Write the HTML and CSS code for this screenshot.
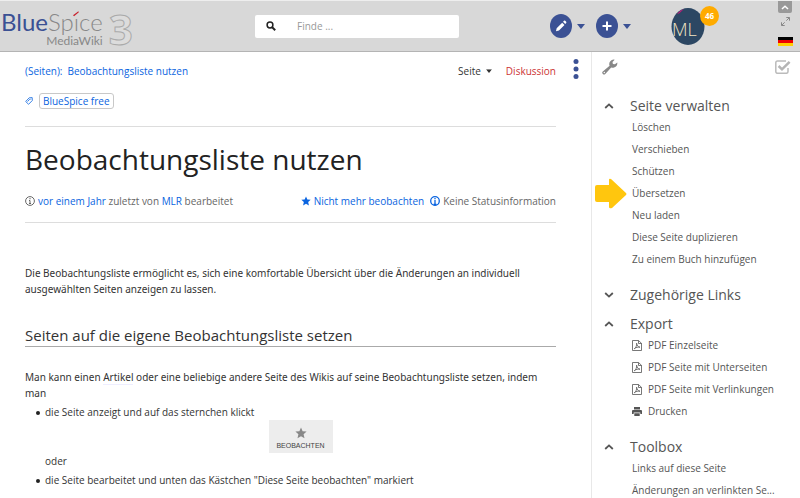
FILE: index.html
```html
<!DOCTYPE html>
<html lang="de">
<head>
<meta charset="utf-8">
<meta name="viewport" content="width=device-width, initial-scale=1">
<title>Beobachtungsliste nutzen – BlueSpice</title>
<link rel="stylesheet" href="styles.css">
</head>
<body>
<svg class="defs" width="0" height="0" aria-hidden="true">
  <symbol id="star" viewBox="0 0 12 12"><path d="M6 .6l1.6 3.7 4 .3-3 2.7.9 4L6 9.200l-3.500 2.100.9-4-3-2.700 4-.3z" fill="currentColor"/></symbol>
  <symbol id="up" viewBox="0 0 10 6"><path d="M1.200 5L5 1.400 8.800 5" fill="none" stroke="currentColor" stroke-width="1.800"/></symbol>
  <symbol id="down" viewBox="0 0 10 6"><path d="M1.200 1L5 4.600 8.800 1" fill="none" stroke="currentColor" stroke-width="1.800"/></symbol>
  <symbol id="caret" viewBox="0 0 8 5"><path d="M0 0h8L4 5z" fill="currentColor"/></symbol>
  <symbol id="pdf" viewBox="0 0 10 11"><path d="M1 .5h5.500L9.500 3.300v7.200H.5V.5zM6.500.5v3h3M2.300 8.800C4 7.500 4.900 5.500 4.600 3.200 5 5.500 6 7 8 7.200 6 6.800 4 7.300 2.300 8.800z" fill="none" stroke="currentColor" stroke-width=".8"/></symbol>
</svg>

<header class="topbar">
  <a class="logo" href="#" aria-label="BlueSpice MediaWiki 3">
    <span class="logo-words">
      <span class="logo-name"><span class="logo-blue">Blue</span><span class="logo-spice">Spice</span></span>
      <span class="logo-sub">MediaWiki</span>
      <svg class="logo-accent" viewBox="0 0 8 6" aria-hidden="true"><path d="M1 1h5v5H1z" fill="#d8d8d8"/><path d="M1 4.300L6.400.2 6.800 1.200 2.100 5.200z" fill="#c8202c"/></svg>
    </span>
    <span class="logo-three">3</span>
  </a>
  <form class="search" role="search">
    <button type="submit" aria-label="Suchen">
      <svg width="10" height="10" viewBox="0 0 10 10"><circle cx="4" cy="4" r="2.900" fill="none" stroke="currentColor" stroke-width="1.500"/><path d="M6.200 6.200L9.200 9.200" stroke="currentColor" stroke-width="2"/></svg>
    </button>
    <input type="search" aria-label="Finde" placeholder="Finde ...">
  </form>
  <div class="actions">
    <button class="round" aria-label="Bearbeiten"><svg width="12" height="12" viewBox="0 0 10 10"><path d="M.8 9.400L1.400 6.800 6 2.200 7.900 4.100 3.300 8.700zM6.700 1.500L7.500.7Q8 .3 8.500.7l.8.8q.4.5 0 1l-.8.8z" fill="currentColor"/></svg></button>
    <button class="drop" aria-label="Weitere Bearbeitungsoptionen"><svg width="8" height="5"><use href="#caret"/></svg></button>
    <button class="round" aria-label="Neu"><svg width="10" height="10" viewBox="0 0 10 10"><path d="M5 .5v9M.5 5h9" stroke="currentColor" stroke-width="2"/></svg></button>
    <button class="drop" aria-label="Weitere Optionen"><svg width="8" height="5"><use href="#caret"/></svg></button>
  </div>
  <a class="avatar" href="#" aria-label="ML, 46 Benachrichtigungen">
    <svg width="34" height="37" viewBox="0 0 34 37" aria-hidden="true"><ellipse cx="17" cy="18.500" rx="16.500" ry="18.500" fill="#2c4763"/><path d="M6 6Q9 2 13 1L8 5.500z" fill="#c2187a"/></svg>
    <span class="initials">ML</span>
    <span class="badge">46</span>
  </a>
  <div class="tools">
    <button class="collapse" aria-label="Kopfzeile einklappen"><svg width="8" height="5" viewBox="0 0 10 6"><use href="#up"/></svg></button>
    <button class="plain" aria-label="Vollbild"><svg width="9" height="9" viewBox="0 0 9 9"><path d="M5.300.5h3.200v3.200M8.300.7L5.300 3.700M.5 5.300v3.200h3.200M.7 8.300L3.700 5.300" fill="none" stroke="currentColor"/></svg></button>
    <button class="plain" aria-label="Sprache: Deutsch"><svg width="15" height="9"><path fill="#000" d="M0 0h15v3H0z"/><path fill="#e00" d="M0 3h15v3H0z"/><path fill="#ffce00" d="M0 6h15v3H0z"/></svg></button>
  </div>
</header>

<div class="page">
  <main class="content">
    <div class="crumbs">
      <nav class="path" aria-label="Brotkrumen"><a href="#">(Seiten):</a><a href="#">Beobachtungsliste nutzen</a></nav>
      <nav class="tabs" aria-label="Seite">
        <button class="tab">Seite <svg width="6" height="4" viewBox="0 0 8 5"><use href="#caret"/></svg></button>
        <a class="missing" href="#">Diskussion</a>
      </nav>
      <button class="more" aria-label="Mehr"><svg width="6" height="20" viewBox="0 0 6 20"><g fill="currentColor"><circle cx="3" cy="2.500" r="2.500"/><circle cx="3" cy="10" r="2.500"/><circle cx="3" cy="17.500" r="2.500"/></g></svg></button>
    </div>
    <div class="tags">
      <svg width="8" height="8" viewBox="0 0 8 8" aria-hidden="true"><path d="M4.200.8L7.200.6 7.300 3.500 3.600 7.300.7 4.500zM4.800 2.200L2.500 4.600M5.700 1.800v.8" fill="none" stroke="currentColor" stroke-width=".8"/></svg>
      <a class="tag" href="#">BlueSpice free</a>
    </div>
    <div class="heading">
      <h1>Beobachtungsliste nutzen</h1>
      <div class="meta">
        <span class="meta-part"><svg width="10" height="10" viewBox="0 0 10 10" aria-hidden="true"><circle cx="5" cy="5" r="4.400" fill="none" stroke="currentColor"/><path d="M5 2v1.300M4 4.500h1v3M4 7.500h2" fill="none" stroke="currentColor"/></svg><span><a href="#">vor einem Jahr</a> zuletzt von <a href="#">MLR</a> bearbeitet</span></span>
        <span class="meta-right">
          <a class="meta-part" href="#"><svg width="10" height="10"><use href="#star"/></svg>Nicht mehr beobachten</a>
          <span class="meta-part"><svg class="status" width="10" height="10" viewBox="0 0 10 10" aria-hidden="true"><circle cx="5" cy="5" r="4.300" fill="none" stroke="currentColor" stroke-width="1.300"/><path d="M5 2v1.200M5 4v4.500M3.500 8.500h3" stroke="currentColor" stroke-width="1.300"/></svg>Keine Statusinformation</span>
        </span>
      </div>
    </div>
    <article class="article">
      <p>Die Beobachtungsliste ermöglicht es, sich eine komfortable Übersicht über die Änderungen an individuell ausgewählten Seiten anzeigen zu lassen.</p>
      <h2>Seiten auf die eigene Beobachtungsliste setzen</h2>
      <p>Man kann einen <span class="term">Artikel</span> oder eine beliebige andere Seite des Wikis auf seine Beobachtungsliste setzen, indem man</p>
      <ul>
        <li>die Seite anzeigt und auf das sternchen klickt
          <div class="watch"><svg width="14" height="12" aria-hidden="true"><use href="#star"/></svg><span>BEOBACHTEN</span></div>
          oder</li>
        <li>die Seite bearbeitet und unten das Kästchen "Diese Seite beobachten" markiert</li>
      </ul>
    </article>
  </main>

  <aside class="sidebar">
    <div class="side-tabs">
      <button class="plain" aria-label="Werkzeuge"><svg width="16" height="16" viewBox="0 0 16 16"><path d="M15.300 3.600a4.500 4.500 0 0 1-6.100 4.800L3.300 14.900a1.700 1.700 0 0 1-2.500-2.400L7.600 6.800A4.500 4.500 0 0 1 12.700.7L10.500 2.900l.4 2 2 .4z" fill="#888"/><circle cx="2.300" cy="13.500" r=".7" fill="#fff"/></svg></button>
      <button class="plain" aria-label="Qualität"><svg width="16" height="14" viewBox="0 0 16 14"><path d="M13 8v3.500q0 1.800-1.800 1.800H2.500Q.8 13.300.8 11.500V2.700Q.8 1 2.500 1H11" fill="none" stroke="#bbb" stroke-width="1.500"/><path d="M3.600 6L7 9.300 14.600 1.800" fill="none" stroke="#b5b5b5" stroke-width="2.500"/></svg></button>
    </div>
    <section>
      <h3><button><svg width="10" height="6"><use href="#up"/></svg>Seite verwalten</button></h3>
      <ul>
        <li><a href="#">Löschen</a></li>
        <li><a href="#">Verschieben</a></li>
        <li><a href="#">Schützen</a></li>
        <li class="marked"><svg class="pointer" width="32" height="31" viewBox="0 0 32 31" aria-hidden="true"><path d="M2 7h12V2q0-2 2-1l15 14q1 1 0 2L17 30q-3 1-3-1v-5H2q-2 0-2-2V9q0-2 2-2z" fill="#ffc60e"/></svg><a href="#">Übersetzen</a></li>
        <li><a href="#">Neu laden</a></li>
        <li><a href="#">Diese Seite duplizieren</a></li>
        <li><a href="#">Zu einem Buch hinzufügen</a></li>
      </ul>
    </section>
    <section class="closed">
      <h3><button><svg width="10" height="6"><use href="#down"/></svg>Zugehörige Links</button></h3>
    </section>
    <section>
      <h3><button><svg width="10" height="6"><use href="#up"/></svg>Export</button></h3>
      <ul>
        <li><a href="#"><svg width="10" height="11"><use href="#pdf"/></svg>PDF Einzelseite</a></li>
        <li><a href="#"><svg width="10" height="11"><use href="#pdf"/></svg>PDF Seite mit Unterseiten</a></li>
        <li><a href="#"><svg width="10" height="11"><use href="#pdf"/></svg>PDF Seite mit Verlinkungen</a></li>
        <li><a href="#"><svg width="10" height="9" viewBox="0 0 10 9"><path d="M2 0h6v2.500H2zM1 3h8q1 0 1 1v3H8.300V5.500H1.700V7H0V4q0-1 1-1zM2.300 6.300h5.400V9H2.300z" fill="currentColor"/></svg>Drucken</a></li>
      </ul>
    </section>
    <section>
      <h3><button><svg width="10" height="6"><use href="#up"/></svg>Toolbox</button></h3>
      <ul>
        <li><a href="#">Links auf diese Seite</a></li>
        <li><a href="#">Änderungen an verlinkten Se...</a></li>
      </ul>
    </section>
  </aside>
</div>
</body>
</html>
```

FILE: styles.css
```css
* { box-sizing: border-box; }

body {
  margin: 0;
  height: 100vh;
  overflow: hidden;
  display: flex;
  flex-direction: column;
  background: #fff;
  color: #333;
  font: 10px/16px "Open Sans", "Noto Sans", sans-serif;
}

a { color: #0a64e0; text-decoration: none; }
svg { display: block; flex: none; }
.defs { position: absolute; }
h1, h2, h3, p, ul { margin: 0; padding: 0; font-weight: 400; }
button {
  padding: 0;
  border: 0;
  background: none;
  color: inherit;
  font: inherit;
  cursor: pointer;
}

/* Top bar */
.topbar {
  flex: none;
  display: grid;
  grid-template-columns: 255px minmax(120px, 204px) 1fr auto auto;
  align-items: center;
  height: 52px;
  border-top: 1px solid #eee;
  border-bottom: 1px solid #b4b4b4;
  background: #d8d8d8;
}

.logo { display: flex; align-items: center; gap: 6px; padding: 6px 0 0 1px; }
.logo-words {
  position: relative;
  display: flex;
  flex-direction: column;
  align-items: flex-end;
  font-family: Lato, sans-serif;
}
.logo-name { font-size: 24px; line-height: 24px; }
.logo-blue { color: #3b5194; }
.logo-spice { color: #888; font-weight: 300; }
.logo-sub { color: #888; font-size: 12px; line-height: 14px; }
.logo-accent { position: absolute; top: 1px; right: 23px; width: 8px; height: 6px; }
.logo-three {
  color: #dcdcdc;
  font: 700 42px/38px "Open Sans", sans-serif;
  -webkit-text-stroke: 1px #aaa;
}

.search {
  display: flex;
  align-items: center;
  height: 23px;
  border-radius: 2px;
  background: #fff;
}
.search button { display: grid; place-items: center; width: 32px; height: 23px; color: #222; }
.search input {
  flex: 1;
  min-width: 0;
  padding: 0 10px;
  border: 0;
  outline: 0;
  background: none;
  font: inherit;
}
.search input::placeholder { color: #999; opacity: 1; }

.actions { display: flex; align-items: center; justify-content: flex-end; color: #3b5194; }
.round {
  display: grid;
  place-items: center;
  width: 22px;
  height: 24px;
  border-radius: 50%;
  background: #3b5194;
  color: #fff;
}
.drop { display: flex; align-items: center; width: 24px; height: 24px; padding-left: 5px; }

.avatar { position: relative; margin-left: 29px; }
.initials {
  position: absolute;
  top: 11px;
  left: 1px;
  color: #f2e6c4;
  font: 300 18px/20px "Open Sans", sans-serif;
}
.badge {
  position: absolute;
  top: -2px;
  right: -14px;
  width: 19px;
  height: 20px;
  border-radius: 50%;
  background: #ffab00;
  color: #fff;
  font-size: 8px;
  font-weight: 700;
  line-height: 20px;
  text-align: center;
}

.tools {
  align-self: start;
  display: flex;
  flex-direction: column;
  align-items: center;
  gap: 4px;
  width: 30px;
  margin-left: 65px;
  color: #888;
}
.collapse {
  display: grid;
  place-items: center;
  width: 14px;
  height: 12px;
  border-radius: 0 0 2px 2px;
  background: #999;
  color: #fff;
}
.tools .plain + .plain { margin-top: 7px; }

/* Page */
.page { flex: 1; min-height: 0; display: grid; grid-template-columns: 1fr 209px; }
.content { padding: 10px 35px 0 25px; }

.crumbs { position: relative; display: flex; justify-content: space-between; line-height: 18px; }
.path { display: flex; gap: 5px; }
.tabs { display: flex; gap: 14px; }
.tab { display: flex; align-items: center; gap: 5px; }
.missing { color: #c33; }
.more { position: absolute; top: -3px; right: -23px; color: #3b5194; }

.tags { display: flex; align-items: center; gap: 6px; margin-top: 13px; color: #0a64e0; }
.tag { padding: 0 3px; border: 1px solid #c8c8c8; border-radius: 3px; line-height: 14px; }

.heading { margin-top: 17px; border: solid #ddd; border-width: 1px 0; }
h1 { margin-top: 13px; color: #222; font-size: 28px; line-height: 38px; }
.meta { display: flex; justify-content: space-between; margin: 15px 0 13px; color: #666; }
.meta-right { display: flex; gap: 6px; }
.meta-part { display: flex; align-items: center; gap: 3px; }
.status { color: #0a64e0; }

.article { margin-top: 42px; }
.article p { font-family: "Noto Sans", "Open Sans", sans-serif; }
h2 { margin: 27px 0 22px; border-bottom: 1px solid #aaa; font-size: 15px; line-height: 22px; }
.term { box-shadow: 0 1px #eef; }
.article ul { margin-top: 3px; padding-left: 20px; list-style: none; }
.article li { position: relative; }
.article li + li { margin-top: 3px; }
.article li::before {
  content: "";
  position: absolute;
  top: 7px;
  left: -9px;
  width: 4px;
  height: 4px;
  border-radius: 50%;
  background: #222;
}
.watch {
  display: flex;
  flex-direction: column;
  align-items: center;
  gap: 2px;
  width: 64px;
  margin: 0 auto;
  padding: 7px 0 3px;
  background: #ededed;
  color: #888;
  font: 7px/9px "Liberation Sans", sans-serif;
}
.watch span { color: #444; }

/* Sidebar */
.sidebar { border: solid #e8e8e8; border-width: 0 0 0 1px; color: #555; }
.side-tabs { display: flex; justify-content: space-between; padding: 7px 9px 21px 10px; }
.sidebar section { margin-bottom: 15px; }
.sidebar .closed { margin-bottom: 9px; }
h3 { font-size: 14px; line-height: 20px; }
h3 button { display: flex; align-items: center; gap: 16px; padding-left: 12px; }
.sidebar ul { padding-left: 40px; list-style: none; }
.sidebar li { line-height: 22px; }
.sidebar li a { display: flex; align-items: center; gap: 6px; color: #555; }
.marked { position: relative; }
.pointer { position: absolute; top: -4px; left: -37px; }
```
